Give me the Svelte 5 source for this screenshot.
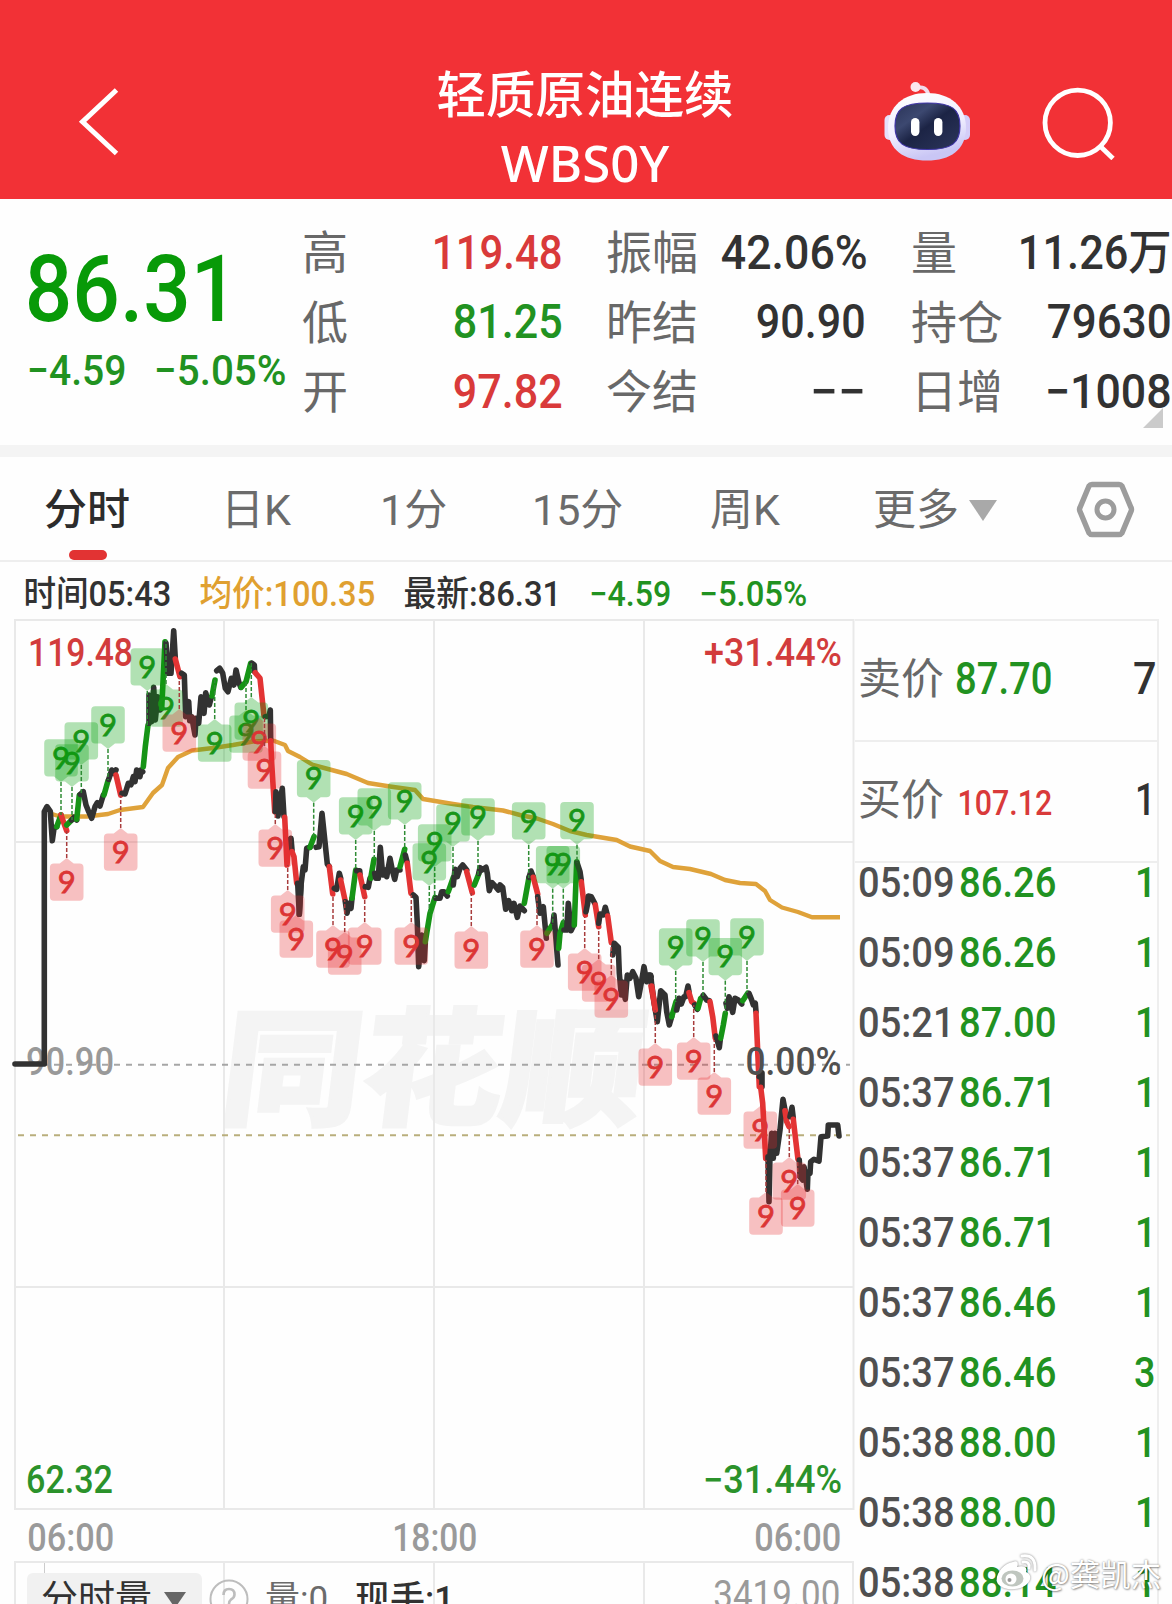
<script>
  const quoteColumns = [
    [
      { label: '高', value: '119.48', width: 127, tone: 'up' },
      { label: '低', value: '81.25', width: 106, tone: 'down' },
      { label: '开', value: '97.82', width: 106, tone: 'up' }
    ],
    [
      { label: '振幅', value: '42.06%', width: 143, tone: 'ink' },
      { label: '昨结', value: '90.90', width: 106, tone: 'ink', shift: true },
      { label: '今结', value: '−−', width: 52, tone: 'ink', shift: true }
    ],
    [
      { label: '量', value: '11.26万', width: 150, tone: 'ink' },
      { label: '持仓', value: '79630', width: 121, tone: 'ink' },
      { label: '日增', value: '−1008', width: 123, tone: 'ink' }
    ]
  ];

  const trades = [
    ['05:09', '86.26', '1'],
    ['05:09', '86.26', '1'],
    ['05:21', '87.00', '1'],
    ['05:37', '86.71', '1'],
    ['05:37', '86.71', '1'],
    ['05:37', '86.71', '1'],
    ['05:37', '86.46', '1'],
    ['05:37', '86.46', '3'],
    ['05:38', '88.00', '1'],
    ['05:38', '88.00', '1'],
    ['05:38', '88.14', '1']
  ];

  // Price trace in blocks: origin of the block, then coloured runs at 3 units per pixel.
  const blocks = [
    [0, 610, [
      ['k', '45,1362 133,1362 133,605 141,590 151,604 157,692 162,655 170,650'],
      ['g', '170,650 183,615'],
      ['r', '183,615 200,662'],
      ['g', '200,645 215,630'],
      ['k', '215,630 222,622 230,630'],
      ['g', '230,628 238,555'],
      ['k', '241,553 250,545 258,585 266,605 275,625 285,590 292,578 300,588 310,555'],
      ['g', '312,555 324,512'],
      ['k', '326,508 335,480 342,490 348,480'],
      ['r', '348,495 362,555'],
      ['k', '366,550 375,552 385,520 393,524 400,500 405,515 410,480 420,500 423,480 428,485'],
      ['g', '430,470 436,410 444,345'],
      ['k', '447,340 447,255 455,335 461,232 466,330 473,260 480,300'],
      ['g', '485,295 495,95'],
      ['k', '498,100 504,190 513,190 521,62 526,145'],
      ['r', '526,147 540,200'],
      ['k', '545,190 553,195 557,320 566,275 569,332 575,320 585,375 588,325 596,340 603,260 612,310 617,248 628,285 634,262'],
      ['g', '636,258 645,210'],
      ['k', '650,182 659,175 668,190 676,235 684,245 694,205 702,225 708,180 716,215 722,232'],
      ['g', '724,232 738,215 752,160'],
      ['k', '756,160 763,165 764,185'],
      ['r', '766,188 780,205 792,318'],
      ['k', '796,320 807,318 811,300 812,392'],
      ['r', '812,392 815,460 824,605'],
      ['k', '826,605 828,545 834,618 840,575 847,535 852,620'],
      ['r', '854,622 861,765 866,690'],
      ['k', '873,685 876,720'],
      ['r', '876,725 882,740 890,820'],
      ['k', '893,820 898,913 903,825']
    ]],
    [240, 640, [
      ['k', '178,823 183,735 190,680 195,690 200,625 210,622'],
      ['g', '210,622 222,590'],
      ['k', '228,622 237,620 246,520 262,672 268,680'],
      ['r', '268,680 278,762'],
      ['k', '283,745 290,748 298,700 302,715'],
      ['r', '302,720 315,780'],
      ['k', '316,785 321,820 327,790 333,805 336,775'],
      ['g', '336,775 347,690'],
      ['k', '350,692 359,692 360,703'],
      ['r', '360,705 374,770'],
      ['k', '376,740 385,742 390,715'],
      ['g', '392,715 402,658'],
      ['k', '404,700 407,715 415,715 421,622 428,705 435,690 440,710 450,655 457,690 464,718 470,690 480,690'],
      ['g', '480,680 494,628'],
      ['k', '496,645 501,665'],
      ['r', '502,670 513,760'],
      ['k', '520,765 528,772 532,850 536,980 545,885 553,962 556,908'],
      ['g', '556,905 570,820 585,772'],
      ['k', '588,775 600,775 605,755 612,755 622,768'],
      ['g', '625,755 640,712'],
      ['k', '640,735 645,688 652,710 660,685 668,675 680,690'],
      ['r', '680,695 697,758'],
      ['g', '703,735 717,700'],
      ['k', '716,700 720,683 726,690 738,682 742,700 748,752 756,728 765,738 775,750 780,735 788,742 797,808 806,782 815,812 822,790 832,832 840,798 853,812'],
      ['g', '853,790 867,712'],
      ['k', '867,712 873,693 880,710'],
      ['r', '880,712 893,762'],
      ['k', '893,770 900,820 910,800 919,895'],
      ['g', '921,880 940,850'],
      ['k', '940,845 942,825 948,900 954,975'],
      ['g', '956,925 960,880 970,848'],
      ['k', '972,870 980,870 985,790 993,872 1000,858'],
      ['g', '1003,855 1010,665']
    ]],
    [420, 760, [
      ['k', '471,308 480,335 484,362'],
      ['r', '484,365 496,465'],
      ['k', '498,455 503,430 505,408 514,410 524,430'],
      ['r', '526,435 536,500'],
      ['k', '536,490 540,462 550,465 556,442 562,465'],
      ['r', '563,468 574,548'],
      ['k', '578,585 583,550 595,562 598,640 604,705 606,665 616,718 622,645 630,655 638,635 648,655 656,710 664,668 672,620 680,665 688,645 693,650'],
      ['r', '693,678 706,748']
    ]],
    [600, 900, [
      ['k', '152,225 155,255 166,330 172,365 182,272 195,285 200,335 208,375 215,350'],
      ['r', '155,258 166,330'],
      ['g', '215,350 228,305'],
      ['k', '230,330 237,295 244,312 252,290 257,290 264,258 267,275'],
      ['r', '267,278 275,305 282,310'],
      ['k', '284,315 292,328'],
      ['g', '294,325 302,295 310,290'],
      ['k', '310,286 320,300 328,302'],
      ['r', '330,305 338,350 346,415'],
      ['k', '348,408 358,443 361,418'],
      ['g', '362,415 370,375 376,340'],
      ['k', '378,310 382,325 387,290 398,337 405,295 415,300 425,312'],
      ['g', '428,302 443,280'],
      ['k', '447,280 455,300 460,315 466,310 468,335'],
      ['r', '468,340 478,560'],
      ['k', '478,530 486,518 486,560'],
      ['r', '482,562 488,610 497,775'],
      ['k', '504,770 507,905 510,765 515,700 520,775 525,700 530,760 540,690 549,598 555,630'],
      ['r', '555,632 560,665 567,680'],
      ['k', '570,650 576,622 580,655'],
      ['r', '580,658 586,710 594,778'],
      ['k', '598,780 600,830 608,840 612,800 622,868 624,815 630,820 632,785 642,778 657,783 663,710 683,708 685,675 713,675 717,708']
    ]]
  ];

  const lineColor = { k: '#323232', g: '#169416', r: '#e33434' };

  const toPage = (pts, ox, oy) =>
    pts
      .split(' ')
      .map((p) => {
        const [x, y] = p.split(',').map(Number);
        return `${(ox + x / 3).toFixed(1)},${(oy + y / 3).toFixed(1)}`;
      })
      .join(' ');

  const priceRuns = blocks.flatMap(([ox, oy, runs]) =>
    runs.map(([tone, pts]) => ({ tone, points: toPage(pts, ox, oy) }))
  );

  const average =
    '52,814 60,816.5 87,816.5 108,814 120,810 143,807 153,793 162,785 168,768 178,757 192,750.5 213,748 233,745 253,741.5 273,740.5 285,745 288,751 300,757 313,765 346.7,774 368,783 390,786.5 415,790 423,799 453,804 473,807 503,810.5 520,815 537,818.5 553,824 570,831 586.7,835 616.7,840 630,846.5 650,851 660,861 673,867 690,869 711,874 725,880 740,883 756,884 765,891 770,900 782,907.5 798,912 812,917.3 840,917.3';

  // x, y of the pointer tip, y where the dashed leader meets the price, side of the label, tone
  const markers = [
    [61, 782, 815, -1, 'g'], [72, 787, 820, -1, 'g'], [81.3, 765, 795, -1, 'g'],
    [108, 749, 780, -1, 'g'], [147.3, 691, 725, -1, 'g'], [166, 684, 640, 1, 'g'],
    [214.7, 719, 680, 1, 'g'], [246, 710, 682, 1, 'g'], [251.3, 697, 663, 1, 'g'],
    [66.7, 858, 831, 1, 'r'], [120.7, 828, 795, 1, 'r'], [179.3, 709, 678, 1, 'r'],
    [259.3, 718, 718, 1, 'r'], [264.5, 746, 716, 1, 'r'], [275.3, 824, 812, 1, 'r'],
    [287.7, 890, 865, 1, 'r'], [296.3, 915, 915, 1, 'r'], [333, 925, 895, 1, 'r'],
    [344.7, 932, 900, 1, 'r'], [364.7, 922, 897, 1, 'r'], [411.3, 922, 895, 1, 'r'],
    [471.3, 926, 893, 1, 'r'], [537, 925, 895, 1, 'r'], [584.7, 948, 917, 1, 'r'],
    [598.7, 959, 928, 1, 'r'], [611.3, 975, 945, 1, 'r'], [655.3, 1043, 1010, 1, 'r'],
    [693.7, 1037, 1005, 1, 'r'], [714.3, 1072, 1040, 1, 'r'], [760.3, 1106, 1106, 1, 'r'],
    [766, 1192, 1160, 1, 'r'], [789.3, 1157, 1127, 1, 'r'], [797.7, 1184, 1160, 1, 'r'],
    [313.7, 802.7, 838, -1, 'g'], [355.7, 840, 870, -1, 'g'], [374.3, 831, 860, -1, 'g'],
    [404.7, 825, 850, -1, 'g'], [434.7, 867, 898, -1, 'g'], [429.3, 886, 912, -1, 'g'],
    [453, 847, 877, -1, 'g'], [478, 841, 875, -1, 'g'], [528.7, 845, 878, -1, 'g'],
    [552.7, 888.7, 925, -1, 'g'], [563.3, 888.7, 925, -1, 'g'], [577, 844.7, 863, -1, 'g'],
    [675.7, 971, 1002, -1, 'g'], [703, 962, 997, -1, 'g'], [725.3, 980.7, 1013, -1, 'g'],
    [747, 961, 993, -1, 'g']
  ];

  const bubble = (x, tip, s) => {
    const near = tip + 5.5 * s;
    const far = tip + 42.7 * s;
    const l = x - 16.8;
    const r = x + 16.8;
    return `M${x} ${tip}L${x + 7} ${near}H${r - 4}Q${r} ${near} ${r} ${near + 4 * s}V${far - 4 * s}Q${r} ${far} ${r - 4} ${far}H${l + 4}Q${l} ${far} ${l} ${far - 4 * s}V${near + 4 * s}Q${l} ${near} ${l + 4} ${near}H${x - 7}Z`;
  };
</script>

{#snippet num(text, width, cap, tone, weight = 500)}
  {@const size = cap / 0.711}
  <svg class="num {tone}" {width} height={cap}>
    <text x={-size * 0.045} y={cap} font-size={size} font-weight={weight} textLength={width + size * 0.08} lengthAdjust="spacingAndGlyphs">{text}</text>
  </svg>
{/snippet}

{#snippet chartLabel(text, x, y, width, color)}
  <text {x} {y} font-size="38" font-weight="500" fill={color} textLength={width} lengthAdjust="spacingAndGlyphs">{text}</text>
{/snippet}

<div class="app">
  <header>
    <svg class="back" width="44" height="72" viewBox="76 86 44 72">
      <path d="M116.500 90 82.500 121.800 116.500 153.500" fill="none" stroke="#fff" stroke-width="5" />
    </svg>
    <div class="title">
      <h1>轻质原油连续</h1>
      <p>WBS0Y</p>
    </div>
    <svg class="robot" width="90" height="84" viewBox="882 79 90 84">
      <defs>
        <linearGradient id="shell" x1="0" y1="0" x2="0.3" y2="1">
          <stop offset="0" stop-color="#fff" />
          <stop offset="0.6" stop-color="#f1efff" />
          <stop offset="1" stop-color="#c9c6f5" />
        </linearGradient>
        <linearGradient id="visor" x1="0" y1="0" x2="1" y2="1">
          <stop offset="0" stop-color="#2a3358" />
          <stop offset="0.300" stop-color="#3c4870" />
          <stop offset="0.5" stop-color="#1c2445" />
          <stop offset="1" stop-color="#2c365c" />
        </linearGradient>
      </defs>
      <path d="M916 88Q926 85 928.500 95" fill="none" stroke="#f0dcec" stroke-width="3.800" />
      <circle cx="915.500" cy="87" r="5" fill="#fbe6ee" />
      <rect x="884.500" y="115" width="10" height="25" rx="5" fill="#e6e0fb" />
      <rect x="960" y="115" width="10" height="25" rx="5" fill="#d4cdf8" />
      <path d="M927 93C950 93 966 106 966 128C966 150 950 160.500 927 160.500S888 150 888 128C888 106 904 93 927 93Z" fill="url(#shell)" />
      <path d="M927.500 103C952 103 960 109 960 126S952 149.500 927.500 149.500S895 143 895 126S903 103 927.500 103Z" fill="url(#visor)" stroke="#4136a8" stroke-width="1.200" />
      <rect x="911" y="118" width="8.400" height="18" rx="4.200" fill="#fff" />
      <rect x="934" y="118" width="8.400" height="18" rx="4.200" fill="#fff" />
    </svg>
    <svg class="search" width="74" height="74" viewBox="1041 86 74 74">
      <circle cx="1077.700" cy="122.800" r="32.700" fill="none" stroke="#fff" stroke-width="4.800" />
      <path d="M1100 146 1113 158.500" stroke="#fff" stroke-width="4.800" />
    </svg>
  </header>

  <section class="quote">
    <div class="last">
      {@render num('86.31', 206, 66, 'price', 500)}
      <div class="change">
        {@render num('−4.59', 96, 30, 'down')}
        {@render num('−5.05%', 129, 30, 'down')}
      </div>
    </div>
    {#each quoteColumns as column}
      <dl>
        {#each column as item}
          <div class="stat" class:shift={item.shift}>
            <dt>{item.label}</dt>
            <dd>{@render num(item.value, item.width, 34, item.tone)}</dd>
          </div>
        {/each}
      </dl>
    {/each}
    <i class="corner"></i>
  </section>

  <nav>
    <span class="active">分时</span>
    <span>日K</span>
    <span>1分</span>
    <span>15分</span>
    <span>周K</span>
    <span class="more">更多<i></i></span>
    <svg width="60" height="58" viewBox="1076 481 60 58" fill="none" stroke="#9c9c9c">
      <path d="M1092 484.500H1119Q1121 484.500 1122 486L1131 507.500Q1132 509.500 1131 511.500L1122 533Q1121 534.500 1119 534.500H1092Q1090 534.500 1089 533L1080 511.500Q1079 509.500 1080 507.500L1089 486Q1090 484.500 1092 484.500Z" stroke-width="5.400" />
      <circle cx="1105.500" cy="509.500" r="8.500" stroke-width="5" />
    </svg>
  </nav>

  <div class="summary">
    {@render num('时间05:43', 145, 25, 'ink')}
    {@render num('均价:100.35', 173, 25, 'avg')}
    {@render num('最新:86.31', 155, 25, 'ink')}
    {@render num('−4.59', 79, 25, 'down')}
    {@render num('−5.05%', 105, 25, 'down')}
  </div>

  <main>
    <div class="left">
      <svg class="chart" width="855" height="892" viewBox="0 619 855 892">
        <text class="brand" transform="translate(217 1115) skewX(-7)" font-size="127" textLength="422" lengthAdjust="spacingAndGlyphs">同花顺</text>
        <g stroke="#e9e9e9" stroke-width="2" fill="none">
          <path d="M15 620H853.500V1509H15ZM224 620V1509M434 620V1509M644 620V1509M15 842H853M15 1287H853" />
        </g>
        <path d="M15 1064.700H850" stroke="#a6a6a6" stroke-width="2" stroke-dasharray="6 6" stroke-dashoffset="9" />
        <path d="M15 1135.300H850" stroke="#b9ae7c" stroke-width="2" stroke-dasharray="6 6" stroke-dashoffset="9" />
        {@render chartLabel('119.48', 28, 666, 105, '#d23c3c')}
        {@render chartLabel('+31.44%', 704, 666, 138, '#d23c3c')}
        {@render chartLabel('90.90', 26, 1075, 88, '#999')}
        {@render chartLabel('62.32', 26, 1492.500, 87, '#2b922b')}
        {@render chartLabel('−31.44%', 703, 1492.500, 139, '#2b922b')}
        <polyline points={average} fill="none" stroke="#dfa23a" stroke-width="4.400" stroke-linejoin="round" />
        {#each priceRuns as run}
          <polyline points={run.points} fill="none" stroke={lineColor[run.tone]} stroke-width="5.600" stroke-linejoin="round" stroke-linecap="round" />
        {/each}
        {@render chartLabel('0.00%', 745.500, 1075, 96, '#505050')}
        {#each markers as [x, tip, end, side, tone]}
          <path d="M{x} {tip}V{end}" stroke={tone === 'g' ? '#2f8c35' : '#a83c3c'} stroke-width="1.500" stroke-dasharray="4 2" />
          <path d={bubble(x, tip, side)} fill={tone === 'g' ? 'rgba(0,160,8,.3)' : 'rgba(230,40,45,.29)'} />
          <text class="nine {tone}" {x} y={tip + side * 24 + 10.500}>9</text>
        {/each}
      </svg>
      <div class="axis">
        {@render num('06:00', 84, 27.5, 'mute')}
        {@render num('18:00', 82, 27.5, 'mute')}
        {@render num('06:00', 84, 27.5, 'mute')}
      </div>
      <div class="volume">
        <span class="picker">分时量<i></i></span>
        <svg width="40" height="40" viewBox="0 0 40 40" fill="none" stroke="#bdbdbd" stroke-width="2">
          <circle cx="20" cy="20" r="18.500" />
          <path d="M14.500 16Q14.500 10 20 10T25.500 15.500Q25.500 18.500 22 20.500Q20 22 20 25M20 28V31" stroke-width="2.600" />
        </svg>
        <span class="vol">量:0</span>
        <span class="now">现手:1</span>
        <span class="max">{@render num('3419.00', 124, 28, 'mute', 400)}</span>
      </div>
    </div>

    <aside>
      <div class="level">
        <span>卖价</span>
        {@render num('87.70', 94, 31, 'down')}
        <b>{@render num('7', 20, 31, 'ink')}</b>
      </div>
      <div class="level small">
        <span>买价</span>
        {@render num('107.12', 92, 25, 'up')}
        <b class="one">{@render num('1', 17, 31, 'ink')}</b>
      </div>
      <ul>
        {#each trades as [time, price, lots]}
          <li>
            {@render num(time, 93, 30.5, 'time')}
            {@render num(price, 94, 30.5, 'down')}
            <b class:one={lots === '1'}>{@render num(lots, 18, 30.5, 'down')}</b>
          </li>
        {/each}
      </ul>
    </aside>
  </main>

  <div class="credit">
    <svg width="44" height="40" viewBox="0 0 44 40">
      <path d="M18 9C22 7 24 10 22 14C28 12 33 14 31 19C36 21 37 26 32 31C25 38 9 38 3 31C-2 24 8 10 18 9Z" fill="#fff" />
      <ellipse cx="17.500" cy="25.500" rx="11" ry="8" fill="#bfc6bf" />
      <circle cx="16" cy="26" r="5.500" fill="#fff" />
      <circle cx="14.500" cy="27" r="2" fill="#999" />
      <path d="M27 3Q41 1 40 17M28 9Q35 8 34 15" fill="none" stroke="#fff" stroke-width="3" stroke-linecap="round" />
    </svg>
    <span>@龚凯杰</span>
  </div>
</div>

<style>
  :global(body) {
    margin: 0;
    background: #fff;
  }
  .app {
    position: relative;
    width: 1172px;
    height: 1604px;
    overflow: hidden;
    display: flex;
    flex-direction: column;
    font-family: Roboto, 'Noto Sans CJK SC', sans-serif;
    background: #fefefe;
    color: #323232;
  }
  .num {
    display: block;
    flex: none;
    overflow: visible;
  }
  .num text { fill: currentColor; }
  .price { color: #089a08; }
  .up { color: #d93a3a; }
  .down { color: #219221; }
  .ink { color: #323232; }
  .avg { color: #e0a030; }
  .mute { color: #9a9a9a; }
  .time { color: #505050; }

  header {
    flex: none;
    box-sizing: border-box;
    height: 199px;
    background: #f23136;
    display: grid;
    grid-template-columns: 76px 351px 316px 139px 159px 1fr;
    align-items: start;
  }
  .back { grid-column: 2; margin-top: 86px; }
  .title {
    grid-column: 3;
    padding-top: 59px;
    text-align: center;
    color: #fff;
  }
  h1 {
    margin: 0;
    font: 500 49.500px/66px 'Noto Sans CJK SC', sans-serif;
  }
  .title p {
    margin: 0;
    padding-top: 2px;
    font: 500 51px/70px 'Noto Sans', sans-serif;
  }
  .robot { grid-column: 5; margin-top: 79px; }
  .search { grid-column: 6; margin-top: 86px; }

  .quote {
    position: relative;
    flex: none;
    box-sizing: border-box;
    height: 246px;
    padding: 18px 3px 0 29px;
    display: grid;
    grid-template-columns: 273px 259px 305px 304px;
    justify-content: start;
  }
  .last { padding-top: 38px; }
  .change {
    display: flex;
    gap: 31px;
    margin-top: 34px;
  }
  dl { margin: 0; }
  dl + dl { padding-left: 45px; }
  .stat {
    height: 69.600px;
    display: flex;
    align-items: center;
    justify-content: space-between;
  }
  .shift { padding-right: 2px; }
  dt {
    margin-top: -5px;
    font: 400 46px/60px 'Noto Sans CJK SC', sans-serif;
    color: #686868;
  }
  dd { margin: 0; }
  .corner {
    position: absolute;
    right: 9px;
    bottom: 17px;
    border-left: 20px solid transparent;
    border-bottom: 20px solid #cbcbcb;
  }

  nav {
    flex: none;
    box-sizing: border-box;
    height: 117px;
    border-top: 12px solid #f4f4f4;
    border-bottom: 2px solid #eee;
    display: grid;
    grid-template-columns: 177px 159px 152px 178px 163px 203px 60px;
    padding: 3px 0 0 44px;
    align-items: center;
    font-size: 43px;
    color: #6b6b6b;
  }
  nav span { position: relative; line-height: 60px; }
  .active { color: #2c2c2c; font-weight: 500; }
  .active::after {
    content: '';
    position: absolute;
    left: 25px;
    top: 70px;
    width: 38px;
    height: 10px;
    border-radius: 5px;
    background: #e23333;
  }
  .more {
    display: flex;
    align-items: center;
    gap: 10px;
  }
  .more i {
    border: 14px solid transparent;
    border-top: 21px solid #a9a9a9;
    border-bottom: 0;
  }

  .summary {
    flex: none;
    height: 57px;
    padding: 19px 0 0 25px;
    box-sizing: border-box;
    display: flex;
    gap: 31px;
  }

  main {
    flex: 1;
    display: grid;
    grid-template-columns: 855px 304px;
    align-items: start;
  }
  .chart { display: block; }
  .chart text { font-family: Roboto, 'Noto Sans CJK SC', sans-serif; }
  .chart .brand {
    font-family: 'Noto Sans CJK SC', sans-serif;
    font-weight: 900;
    fill: #f4f4f4;
    stroke: #f4f4f4;
    stroke-width: 3px;
  }
  .chart .nine {
    font-family: Lato, Roboto, sans-serif;
    font-size: 31px;
    font-weight: 400;
    stroke-width: 0.800px;
    text-anchor: middle;
  }
  .nine.g { fill: #189518; stroke: #189518; }
  .nine.r { fill: #dc3535; stroke: #dc3535; }
  .axis {
    height: 50px;
    box-sizing: border-box;
    padding: 12px 15px 0 29px;
    display: flex;
    justify-content: space-between;
  }
  .volume {
    height: 46px;
    margin-left: 14px;
    width: 840px;
    box-sizing: border-box;
    border: 2px solid #e9e9e9;
    border-bottom: 0;
    padding: 10px 13px 0 11px;
    display: flex;
    align-items: flex-start;
    overflow: hidden;
    background:
      linear-gradient(#ccc, #ccc) 28px 0 / 1px 100% no-repeat,
      linear-gradient(#e9e9e9, #e9e9e9) 207px 0 / 2px 100% no-repeat,
      linear-gradient(#e9e9e9, #e9e9e9) 417px 0 / 2px 100% no-repeat,
      linear-gradient(#e9e9e9, #e9e9e9) 627px 0 / 2px 100% no-repeat;
    font: 400 35px/54px Roboto, 'Noto Sans CJK SC', sans-serif;
  }
  .picker {
    flex: none;
    box-sizing: border-box;
    width: 175px;
    height: 60px;
    padding-left: 14px;
    border-radius: 6px;
    background: #f1f1f1;
    display: flex;
    gap: 12px;
    font-size: 37px;
  }
  .picker i {
    align-self: flex-start;
    margin-top: 19px;
    border: 11px solid transparent;
    border-top: 16px solid #666;
    border-bottom: 0;
  }
  .volume > svg { flex: none; margin: 6px 16px 0 7px; }
  .vol { color: #6b6b6b; width: 90px; }
  .now { font-weight: 500; }
  .max { margin-left: auto; padding-top: 7px; }

  aside {
    box-sizing: border-box;
    height: 985px;
    border-right: 2px solid #eee;
    border-top: 2px solid #eee;
  }
  .level {
    box-sizing: border-box;
    height: 121px;
    border-bottom: 2px solid #eee;
    padding: 42px 2px 0 3px;
    display: flex;
    align-items: flex-start;
  }
  .level span {
    width: 99px;
    margin-top: -16px;
    font: 400 43px/56px 'Noto Sans CJK SC', sans-serif;
    color: #686868;
  }
  .level b { margin-left: auto; }
  .level.small span { width: 101px; }
  .level.small :global(.up) { margin-top: 6px; }
  .level .one { margin-right: 1px; }
  ul {
    margin: 0;
    padding: 3px 3px 0 5px;
    list-style: none;
  }
  li {
    height: 70px;
    display: flex;
    gap: 8px;
  }
  li b { margin-left: auto; }
  li .one { margin-right: -1px; }

  .credit {
    position: absolute;
    left: 995px;
    top: 1553px;
    display: flex;
    align-items: center;
    gap: 2px;
    color: #fff;
    font: 400 30.500px/40px 'Noto Sans CJK SC', sans-serif;
    text-shadow: 0 0 2px rgba(0, 0, 0, 0.45), 1px 1px 2px rgba(0, 0, 0, 0.35);
  }
  .credit svg { filter: drop-shadow(0 0 1px rgba(0, 0, 0, 0.5)); }
</style>
